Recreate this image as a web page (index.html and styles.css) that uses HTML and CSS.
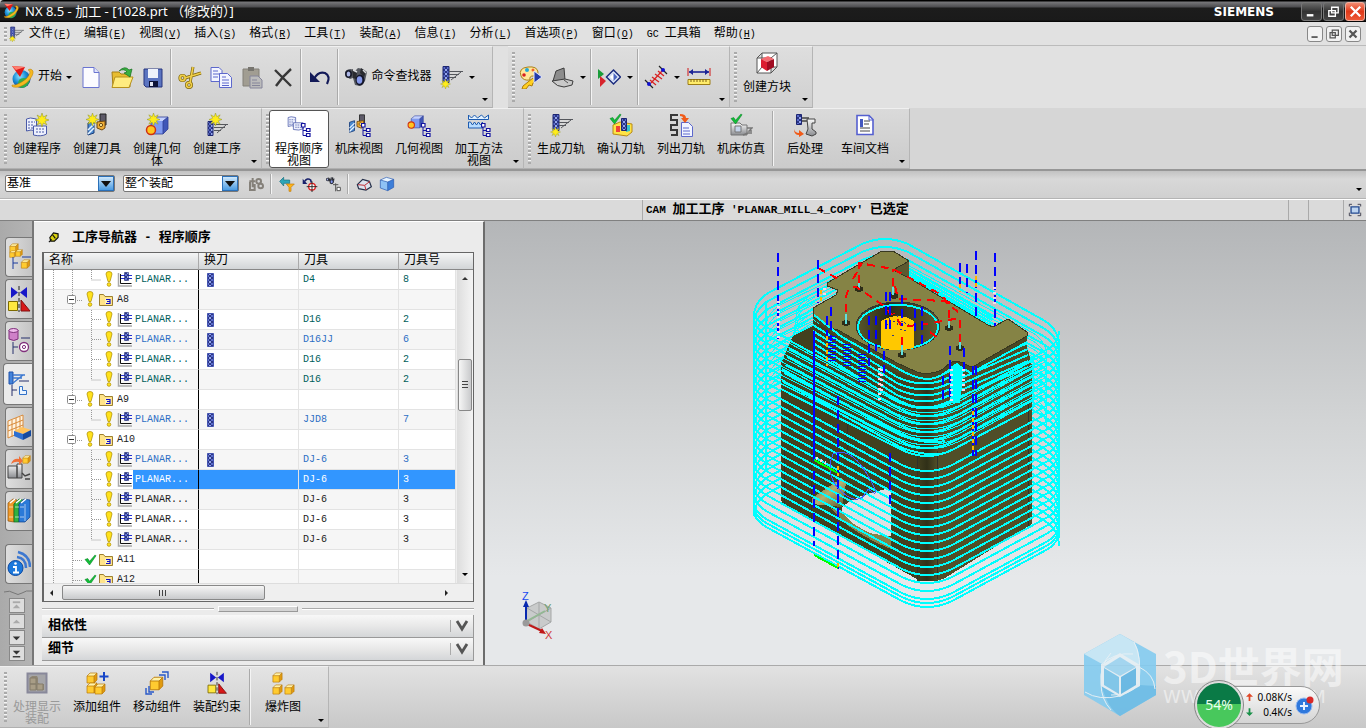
FILE: index.html
```html
<!DOCTYPE html>
<html lang="zh-CN">
<head>
<meta charset="utf-8">
<title>NX 8.5 - 加工</title>
<link rel="stylesheet" href="styles.css">
</head>
<body>
<svg class="defs" aria-hidden="true">
<defs>
<linearGradient id="gBlue" x1="0" x2="1" y1="0" y2="0"><stop offset="0" stop-color="#27338c"/><stop offset=".45" stop-color="#8da0ea"/><stop offset="1" stop-color="#27338c"/></linearGradient>
<radialGradient id="gGlobe" cx=".4" cy=".35" r=".7"><stop offset="0" stop-color="#8fe4ff"/><stop offset=".5" stop-color="#1a8fd8"/><stop offset="1" stop-color="#0a3a90"/></radialGradient>
<linearGradient id="gSteel" x1="0" x2="0" y1="0" y2="1"><stop offset="0" stop-color="#fafafa"/><stop offset="1" stop-color="#8a8c90"/></linearGradient>
<pattern id="knurl" width="4" height="4" patternUnits="userSpaceOnUse"><rect width="4" height="4" fill="#5a6ccc"/><path d="M0 0h2v2h2v2h-2v-2h-2z" fill="#2c3684"/><path d="M2 0h2v2h-2z" fill="#94a6ee"/></pattern>

<symbol id="spark" viewBox="0 0 14 14"><path d="M7 0l1.400 4L12 2l-2 3.600L14 7l-4 1.400 2 3.600-3.600-2L7 14l-1.400-4L2 12l2-3.600L0 7l4-1.400L2 2l3.600 2z" fill="#ffec1a" stroke="#8a9020" stroke-width=".5"/></symbol>
<symbol id="minitree" viewBox="0 0 10 14"><path d="M2 4v8.500h4M2 7.500h4" fill="none" stroke="#1414a0"/><path d="M.5 .5h3.500v3.500h-3.500zM5.500 5.500h3.500v3h-3.500zM5.500 10.500h3.500v3h-3.500z" fill="#fff" stroke="#1414a0" stroke-width="1.200"/></symbol>
<symbol id="gcube" viewBox="0 0 12 12"><path d="M1 4l3-3h7l-3 3z" fill="#fff2a8"/><path d="M1 4h7v7h-7z" fill="#ffcb30"/><path d="M8 4l3-3v7l-3 3z" fill="#e09a10"/><path d="M1 4l3-3h7v7l-3 3h-7zM1 4h7v7M8 4l3-3" fill="none" stroke="#b87808" stroke-width=".7"/></symbol>
<symbol id="check" viewBox="0 0 14 12"><path d="M1 6l3-1 2 3 6-7 1 1-7 10z" fill="#12c03a" stroke="#067a20" stroke-width=".6"/></symbol>

<symbol id="nx" viewBox="0 0 24 24"><circle cx="11.500" cy="14" r="9" fill="url(#gGlobe)"/><path d="M8 19q0-6 6-6 5 0 6 2-2 7-8 8-4-1-4-4" fill="#2fae4c"/><path d="M20 4q5 1 2 7-4 8-13 11-8 1-7-2 2 1 8-2 8-4 10-10 0-3-2-3z" fill="#f6b820" stroke="#b07808" stroke-width=".5"/><path d="M2 1l13 1-5 10z" fill="#e01818"/><path d="M2 1l13 1-9 3z" fill="#ff8070"/></symbol>
<symbol id="new" viewBox="0 0 24 24"><path d="M4 2.500h11l5 5v15h-16z" fill="#fbfbff" stroke="#6a74d0"/><path d="M15 2.500v5h5" fill="#dfe3fb" stroke="#6a74d0"/></symbol>
<symbol id="open" viewBox="0 0 24 24"><path d="M2 7h7l2 2h9v13h-17z" fill="#e8bd30" stroke="#a58018"/><path d="M5 12h18l-4 10.500h-17z" fill="#ffec80" stroke="#b8921c"/><path d="M9 6q6-6 10-1l3-1-2 8-6-4 3-1q-3-4-8-1" fill="#38b040" stroke="#17701f" stroke-width=".7"/></symbol>
<symbol id="save" viewBox="0 0 24 24"><path d="M3 4h18v18h-16l-2-2z" fill="#5b74c0" stroke="#26357e"/><path d="M7 4h10v9h-10z" fill="#eef2fb"/><path d="M8 16h9v6h-9z" fill="#0d1238"/><path d="M9 17h3v4h-3z" fill="#e0e4f2"/></symbol>
<symbol id="cut" viewBox="0 0 24 24"><g fill="none" stroke="#7d6408" stroke-width="3"><circle cx="4.500" cy="13" r="2.600"/><circle cx="11" cy="20" r="2.500"/><path d="M7 13l16-5M12 18l3-16"/></g><g fill="none" stroke="#f0cf4a" stroke-width="1.600"><circle cx="4.500" cy="13" r="2.600"/><circle cx="11" cy="20" r="2.500"/><path d="M7 13l16-5M12 18l3-16"/></g></symbol>
<symbol id="copy" viewBox="0 0 24 24"><g fill="#f3f5ff" stroke="#5d68cc"><path d="M2 2.500h8l3 3v11h-11z"/><path d="M10.500 8.500h8l4 4v10h-12z"/></g><path d="M4 6h5M4 9h7M4 12h5M13 12h4M13 15h7M13 18h7M13 20.500h7" stroke="#5d68cc"/></symbol>
<symbol id="paste" viewBox="0 0 24 24"><path d="M3 4h16v17h-16z" fill="#a19d92" stroke="#838078"/><path d="M8 2h6v4h-6z" fill="#77756f"/><path d="M10 11h8l4 4v8h-12z" fill="#bbb" stroke="#85859a"/><path d="M12 15h5M12 18h8M12 20.500h8" stroke="#85859a"/></symbol>
<symbol id="del" viewBox="0 0 24 24"><path d="M4 5l16 16M20 4q-8 7-15 17" fill="none" stroke="#383838" stroke-width="2.400"/></symbol>
<symbol id="undo" viewBox="0 0 24 24"><path d="M6 14q4-8 11-6 6 3 2 11" fill="none" stroke="#131a58" stroke-width="2.200"/><path d="M2 7v10h10z" fill="#131a58"/></symbol>
<symbol id="bino" viewBox="0 0 24 24"><path d="M1 8q1-4 6-4l4 2 3-3 5 1 4 3-2 9-5 5-5-1-2-7-3 1-3-2z" fill="#55585f"/><path d="M8 4l5 4-1 6-3-1zM17 3l5 4-2 5-4-4z" fill="#2a2b30"/><ellipse cx="4.500" cy="9" rx="3.500" ry="4" fill="#1a1c2c"/><ellipse cx="4.500" cy="9" rx="1.800" ry="2.500" fill="#aeb8e8"/><ellipse cx="16" cy="15" rx="4.500" ry="5.500" fill="#15172a"/><ellipse cx="15.500" cy="15" rx="2.800" ry="3.800" fill="#8699ea"/><path d="M9 5l4 2M19 5l3 3" stroke="#d6d8dc" stroke-width="1.500"/></symbol>
<symbol id="mill" viewBox="0 0 24 24"><path d="M4 1.500h6v16h-6z" fill="url(#knurl)" stroke="#1d2672"/><path d="M10 6.500h14M10 9.500h10M10 12.500h7M22 7l-10 8" stroke="#55575c" fill="none"/><use href="#spark" x="0" y="14" width="13" height="10"/></symbol>
<symbol id="palette" viewBox="0 0 24 24"><path d="M2 11q-3-8 7-9 9-1 10 5 0 4-5 4-4 0-3 4-7 1-9-4" fill="#ffe79a" stroke="#a98018"/><circle cx="8" cy="5" r="2" fill="#22a7d8"/><circle cx="5" cy="10" r="1.800" fill="#d82020"/><circle cx="14" cy="5" r="1.500" fill="#f06030"/><path d="M14 13l-10 8-1 3h4l3-4 3 1 1-3 5-4" fill="#ffcf20" stroke="#ad7d0c"/><path d="M15 6l8 6-8 6z" fill="#253ba8" stroke="#dfe6ff"/></symbol>
<symbol id="shade" viewBox="0 0 24 24"><path d="M3 16l3-10 8-3 1 12z" fill="#8c8c8c" stroke="#3c3c3c"/><path d="M2 16l13-2 8 2-1 4-8 2q-7 0-12-6" fill="#c9c9c9" stroke="#3c3c3c"/><path d="M14 15l4 3" fill="none" stroke="#555"/></symbol>
<symbol id="play" viewBox="0 0 24 24"><path d="M1 4l6 5-6 5z" fill="#1a9c3a"/><path d="M3 11l6 5-6 6z" fill="#d8242c"/><path d="M16.500 5l7 7-7 7-7-7z" fill="#dce6fa" stroke="#1c2c7e" stroke-width="1.500"/><path d="M16.500 8l4 4-4 4-4-4z" fill="#4c67c0"/><path d="M16.500 8v8l-4-4z" fill="#fff"/></symbol>
<symbol id="offset" viewBox="0 0 24 24"><path d="M1 15l8 8M15 1l8 8" stroke="#222" stroke-width="1.200"/><path d="M6 15l6 5M8 12l7 5M11 9l7 5M14 6l6 5M7 18l11-12" stroke="#d82020" stroke-width="1.200"/><circle cx="5" cy="19" r="2" fill="#1111d0"/><circle cx="19" cy="5" r="2" fill="#1111d0"/></symbol>
<symbol id="measure" viewBox="0 0 24 24"><path d="M1 3v8M23 3v8" stroke="#d01818"/><path d="M2 7h20" stroke="#1c2496" stroke-width="1.600"/><path d="M2 7l4-3v6zM22 7l-4-3v6z" fill="#1c2496"/><path d="M1 14.500h22v5h-22z" fill="#ffec6a" stroke="#9c7d15"/><path d="M4 14v3M7 14v3M10 14v3M13 14v3M16 14v3M19 14v3" stroke="#806512"/></symbol>
<symbol id="redcube" viewBox="0 0 24 24"><path d="M2 7h14v15h-14zM7 2h15v14h-15zM2 7l5-5M16 7l6-5M16 22l6-6M2 22l5-6" fill="#fff" stroke="#555"/><path d="M6 8l7-3 6 3-7 3z" fill="#f46a70"/><path d="M6 8l6 3v9l-6-4z" fill="#dc1c30"/><path d="M12 11l7-3v8l-7 4z" fill="#a00c22"/></symbol>
<symbol id="program" viewBox="0 0 24 24"><path d="M1.500 6q3-2 10 0v12q-6-2-10 0z" fill="#eef1fd" stroke="#4a5aa8"/><path d="M8.500 13h13v8q-5 3-13 1z" fill="#eef1fd" stroke="#4a5aa8"/><path d="M3 9h7M3 12h6M3 15h5M11 16h9M11 19h9" stroke="#4a5aa8" stroke-dasharray="2 1"/></symbol>
<symbol id="cprog" viewBox="0 0 24 24"><use href="#program"/><use href="#spark" x="10" y="0" width="14" height="14"/></symbol>
<symbol id="tool" viewBox="0 0 24 24"><path d="M15 1h6v11h-6z" fill="#5d5a68" stroke="#222"/><path d="M12 9l8-1v7l-3 2-5-2z" fill="#f0ae35" stroke="#704810"/><circle cx="16" cy="12" r="1.600" fill="#fff2a0" stroke="#704810"/><path d="M3 10l6-2v12l-6 2z" fill="#4c8ad0" stroke="#173b78"/><path d="M3 17l6-6M3 21l6-6" stroke="#e6f3ff" stroke-width="1.500"/></symbol>
<symbol id="ctool" viewBox="0 0 24 24"><use href="#tool"/><use href="#spark" x="1" y="0" width="13" height="13"/></symbol>
<symbol id="geom" viewBox="0 0 24 24"><path d="M6 8l5-4h12l-5 4z" fill="#c5d2ff"/><path d="M6 8h12v13h-12z" fill="#809af0"/><path d="M18 8l5-4v12l-5 5z" fill="#4057b8"/><path d="M6 8l5-4h12v12l-5 5h-12zM18 8v13M18 8l5-4" fill="none" stroke="#2e3e96" stroke-width=".8"/><circle cx="6" cy="17" r="4.500" fill="#ffc520" stroke="#d03010" stroke-width="1.500"/></symbol>
<symbol id="cgeom" viewBox="0 0 24 24"><use href="#geom"/><use href="#spark" x="2" y="0" width="13" height="13"/></symbol>
<symbol id="cop" viewBox="0 0 24 24"><path d="M3 8.500h5v14h-5z" fill="url(#knurl)" stroke="#1d2672"/><path d="M9 11.500h14M9 14.500h11M9 17.500h7M21 12l-9 8" stroke="#55575c" fill="none"/><use href="#spark" x="4" y="0" width="13" height="13"/></symbol>
<symbol id="vprog" viewBox="0 0 24 24"><use href="#program" x="0" y="-1" width="18" height="20"/><use href="#minitree" x="14" y="10" width="10" height="14"/></symbol>
<symbol id="vtool" viewBox="0 0 24 24"><use href="#tool" x="0" y="0" width="20" height="22"/><use href="#minitree" x="14" y="10" width="10" height="14"/></symbol>
<symbol id="vgeom" viewBox="0 0 24 24"><use href="#geom" x="0" y="0" width="17" height="17"/><use href="#minitree" x="14" y="10" width="10" height="14"/></symbol>
<symbol id="vmethod" viewBox="0 0 24 24"><path d="M1.500 2v4.500h20v-4.500l-4 3-3-3-4 3-3-3-3 3z" fill="#e2f1ff" stroke="#1c5bb0"/><path d="M1.500 9v6h14v-6l-2 3-2-3-2 3-2-3-2 3-2-3z" fill="#b8dcff" stroke="#1c5bb0"/><use href="#minitree" x="14" y="10" width="10" height="14"/></symbol>
<symbol id="verify" viewBox="0 0 24 24"><path d="M4 12l7-3 12 2v8l-5 4-14-2z" fill="#ffe345" stroke="#b78a14"/><path d="M7 13h4v6h-4z" fill="#ef4038"/><path d="M17 12h4v6l-4 1z" fill="#36c5ca"/><path d="M12.500 5.500h5v12h-5z" fill="url(#knurl)" stroke="#1d2672"/><use href="#check" x="0" y="0" width="13" height="11"/></symbol>
<symbol id="list" viewBox="0 0 24 24"><path d="M9 2h-7v5h6v5h-6v5h6v5h-6" fill="none" stroke="#383838" stroke-width="2"/><path d="M12.500 9.500h7l4 4v10h-11z" fill="#f1f4ff" stroke="#5d68cc"/><path d="M14 15h6M14 18h7M14 21h7" stroke="#5d68cc"/><path d="M11 1q6 0 6 4h3l-4 5-4-5h2q0-2-3-2z" fill="#f05a18"/></symbol>
<symbol id="sim" viewBox="0 0 24 24"><path d="M2 10h9l2 2h5v10h-16z" fill="url(#gSteel)" stroke="#777"/><path d="M6 13h6v6h-6z" fill="#c6d4ea" stroke="#777"/><path d="M18 15h5l-3 3h3M14 22l5-2h4" fill="none" stroke="#777" stroke-width="1.400"/><use href="#check" x="1" y="0" width="13" height="11"/></symbol>
<symbol id="post" viewBox="0 0 24 24"><path d="M3.500 1.500h5v10h-5z" fill="url(#knurl)" stroke="#1d2672"/><path d="M9 5h7M9 8h5" stroke="#444" stroke-width="1.500"/><path d="M14 6h8v4h-3v6l4 3v2l-4 2-6-2 2-5z" fill="url(#gSteel)" stroke="#444"/><path d="M1 16q1 4 5 4v-3l5 4-5 3v-2q-5 0-5-6" fill="#f05a18"/></symbol>
<symbol id="doc" viewBox="0 0 24 24"><path d="M4 2.500h12l4 4v15h-16z" fill="#fff" stroke="#5560d0" stroke-width="1.600"/><path d="M7 6h3v8h-3z" fill="#4458c0"/><path d="M11 8h6M11 11h5M7 15h10M7 18h10" stroke="#444"/><path d="M16 2v5h4" fill="none" stroke="#5560d0"/></symbol>
<symbol id="links" viewBox="0 0 24 24"><g fill="none" stroke="#85817a" stroke-width="3"><path d="M3 9v12h7v-9M7 3v14M2 8h9"/><circle cx="16" cy="8" r="3.500"/><circle cx="19" cy="15" r="3.500"/></g></symbol>
<symbol id="filter" viewBox="0 0 24 24"><path d="M1 8l6-6v4h9v5h-9v4z" fill="#2da6b8" stroke="#126c7c"/><path d="M11 12h12l-5 5v6h-3v-6z" fill="#ffb418" stroke="#c07808"/></symbol>
<symbol id="target" viewBox="0 0 24 24"><path d="M4 8q4-6 9-2l1 4" fill="none" stroke="#18206a" stroke-width="2.400"/><path d="M1 4v8h7z" fill="#18206a"/><circle cx="15" cy="16" r="5" fill="#fff" stroke="#e02020" stroke-width="2"/><path d="M15 8v16M7 16h16" stroke="#222" stroke-width="1.400"/></symbol>
<symbol id="finder" viewBox="0 0 24 24"><use href="#bino" x="0" y="0" width="16" height="14"/><path d="M16 11v12M12 13h8M18 17h5v5h-5z" fill="#fff" stroke="#555" stroke-width="1.500"/></symbol>
<symbol id="wire" viewBox="0 0 24 24"><path d="M2 13l8-8 10 3 3 8-8 5-11-2z" fill="#dbe2ef" stroke="#26304a" stroke-width="1.800"/><path d="M3 13l10 1 8-6M13 14l2 7" fill="none" stroke="#c22f38" stroke-width="1.500"/></symbol>
<symbol id="bluecube" viewBox="0 0 24 24"><path d="M2 6l9-4 11 3-9 4z" fill="#e9f5ff"/><path d="M2 6l11 3v13l-11-4z" fill="#8fc2f5"/><path d="M13 9l9-4v12l-9 5z" fill="#3d7ed8"/><path d="M2 6l9-4 11 3v12l-9 5-11-4zM2 6l11 3v13M13 9l9-4" fill="none" stroke="#2558b0"/></symbol>

<symbol id="tAsm" viewBox="0 0 24 28"><use href="#gcube" x="2" y="0" width="10" height="10"/><use href="#gcube" x="2" y="7" width="8" height="8"/><use href="#gcube" x="8" y="6" width="8" height="8"/><path d="M6 14v12M6 20h5M15 14h9" stroke="#1a3a9c"/><use href="#gcube" x="13" y="16" width="11" height="10"/></symbol>
<symbol id="constraint" viewBox="0 0 24 28"><path d="M4 2v11l7-5.500zM20 2v11l-7-5.500z" fill="#1818c8"/><path d="M12 1v26" stroke="#222" stroke-dasharray="4 2"/><path d="M1.500 16.500h9v9h-9z" fill="#ffe840" stroke="#7d6a00"/><path d="M14 15l9 11h-9z" fill="#d81818" stroke="#801010"/></symbol>
<symbol id="tPart" viewBox="0 0 24 28"><path d="M2 3v9q5 3 9 0v-9z" fill="#cf80c8" stroke="#80307c"/><ellipse cx="6.500" cy="3.500" rx="4.500" ry="2" fill="#f0bcec" stroke="#80307c"/><path d="M14 11h9M6 15v12M6 20h5" stroke="#26306c"/><circle cx="17" cy="20" r="4.500" fill="#fff" stroke="#80307c" stroke-width="1.300"/><circle cx="17" cy="20" r="1.600" fill="none" stroke="#80307c"/></symbol>
<symbol id="tOp" viewBox="0 0 24 28"><path d="M3 2h4v12h-4z" fill="#4384dc" stroke="#2050a8"/><path d="M7 5h12M7 8h9M17 5l-10 8" stroke="#3c78d0" stroke-width="1.400"/><path d="M13 11h10M6 15v11M6 20h5" stroke="#26306c"/><path d="M13.500 16.500h3v4h4v4h-7z" fill="#eaf4ff" stroke="#3070c8"/></symbol>
<symbol id="tFeat" viewBox="0 0 24 28"><path d="M1 8l15-6v16l-15 7z" fill="#fff3df" stroke="#d88a3a"/><path d="M1 13l15-6M1 18l15-6M5 7v17M9 5v18M13 4v17" stroke="#d88a3a"/><path d="M7 18l8-4 9 3-8 4z" fill="#ffc25c"/><path d="M7 18l9 3v6l-9-4z" fill="#2d6fd0"/><path d="M16 21l8-4v6l-8 4z" fill="#164a9e"/></symbol>
<symbol id="tMach" viewBox="0 0 24 28"><path d="M1 11h9v12h-9zM10 9h5v14h-5z" fill="url(#gSteel)" stroke="#444"/><path d="M15 18l3 3 5-2M18 24h5" fill="none" stroke="#444" stroke-width="1.400"/><path d="M4 9q2-6 8-5v-3l4 5-4 4v-3q-4-1-8 2" fill="#f07038"/><use href="#gcube" x="15" y="0" width="9" height="9"/></symbol>
<symbol id="tBooks" viewBox="0 0 24 28"><g stroke-width=".7"><path d="M1 6l5-4 4 1-3 4v18l-6-1z" fill="#f09a28" stroke="#8c4e08"/><path d="M7 7l5-5 4 1-4 4v18h-5z" fill="#30b040" stroke="#0f6a1c"/><path d="M12 7l5-5 6 1v17l-5 5h-6z" fill="#2a7ad8" stroke="#0e3f88"/></g><path d="M3 6l5-4M9 6l5-4M14 6l5-4" stroke="#fff" stroke-width="1.500"/><path d="M18 7v17M2 10h4M2 20h4M8 10h4M8 20h4M13 10h4M13 20h4" stroke="#fff" stroke-opacity=".6"/></symbol>
<symbol id="tInfo" viewBox="0 0 24 28"><path d="M10 7q9 1 9 11M11 2q12 3 12 15" fill="none" stroke="#3d78d0" stroke-width="2.500"/><circle cx="8.500" cy="18" r="7.500" fill="#1b78dc" stroke="#0c48a0"/><path d="M6 17h3v5M6 22.500h6" fill="none" stroke="#fff" stroke-width="1.800"/><circle cx="8.500" cy="13.500" r="1.300" fill="#fff"/></symbol>

<symbol id="asmOff" viewBox="0 0 24 24"><path d="M2.500 2.500h19v19h-19z" fill="#a5a5a8" stroke="#88889a" stroke-width="2"/><path d="M5 7l2-2h5l1 2v5l2 1h4v6h-14z" fill="#8f8674"/><path d="M5 7h6v6h-6zM5 13h6v6h-6zM12 13h6v6h-6z" fill="#a89d86" stroke="#857c6a"/></symbol>
<symbol id="asmAdd" viewBox="0 0 24 24"><use href="#gcube" x="1" y="1" width="12" height="12"/><use href="#gcube" x="1" y="11" width="12" height="12"/><use href="#gcube" x="9" y="12" width="12" height="12"/><path d="M19 1v9M14.500 5.500h9" stroke="#1746c8" stroke-width="2"/></symbol>
<symbol id="asmMove" viewBox="0 0 24 24"><use href="#gcube" x="4" y="5" width="15" height="15"/><path d="M17 1h6v6M14 4h6v5M1 17v6h6M4 15v6h5" fill="none" stroke="#2858c8" stroke-width="1.400"/></symbol>
<symbol id="explode" viewBox="0 0 24 24"><use href="#gcube" x="1" y="1" width="11" height="11"/><use href="#gcube" x="1" y="13" width="11" height="11"/><use href="#gcube" x="13" y="13" width="11" height="11"/></symbol>

<symbol id="bang" viewBox="0 0 8 16"><path d="M1 3q0-2.500 3-2.500t3 2.500l-2 7.500h-2z" fill="#ffe21c" stroke="#b59508" stroke-width=".8"/><circle cx="4" cy="13.500" r="1.800" fill="#ffe21c" stroke="#b59508" stroke-width=".8"/></symbol>
<symbol id="folder" viewBox="0 0 14 13"><path d="M.5 1.500h4l1.500 2h7.500v9h-13z" fill="#ffe48a" stroke="#9c8030"/><path d="M6 5.500h6v6h-6z" fill="#fff2b8"/><path d="M7 6.500h4v4h-4M8 8.500h3" stroke="#1212c8" stroke-width="1.200" fill="none"/></symbol>
<symbol id="opicon" viewBox="0 0 16 15"><path d="M1.500 1v13h13.500" fill="none" stroke="#aaa" stroke-width="1.500"/><path d="M3.500 2v9.500h11" fill="none" stroke="#111"/><path d="M4 3.500h11M4 6.500h11" stroke="#2430d0"/><path d="M7.500 .5h4v8h-4z" fill="url(#knurl)" stroke="#1d2672" stroke-width=".6"/></symbol>
<symbol id="gLeaf" viewBox="0 0 89 20"><path d="M9.500 0v20M28.500 0v20M47.500 0v20M48 9.500h9" fill="none" stroke="#999" stroke-dasharray="1 1"/><use href="#bang" x="61" y="1" width="8" height="16"/><use href="#opicon" x="73" y="2" width="16" height="15"/></symbol>
<symbol id="gLast" viewBox="0 0 89 20"><path d="M9.500 0v20M28.500 0v20M47.500 0v10h9" fill="none" stroke="#999" stroke-dasharray="1 1"/><use href="#bang" x="61" y="1" width="8" height="16"/><use href="#opicon" x="73" y="2" width="16" height="15"/></symbol>
<symbol id="gGroup" viewBox="0 0 71 20"><path d="M9.500 0v20M28.500 0v20M33 10.500h5" fill="none" stroke="#999" stroke-dasharray="1 1"/><rect x="23.500" y="5.500" width="8" height="8" rx="1" fill="#fff" stroke="#8a8a8a"/><path d="M25 9.500h5" stroke="#333"/><use href="#bang" x="42" y="1" width="8" height="16"/><use href="#folder" x="55" y="3" width="14" height="13"/></symbol>
<symbol id="gDone" viewBox="0 0 71 20"><path d="M9.500 0v20M28.500 0v20M29 10.500h10" fill="none" stroke="#999" stroke-dasharray="1 1"/><use href="#check" x="40" y="4" width="13" height="11"/><use href="#folder" x="55" y="3" width="14" height="13"/></symbol>
<symbol id="chg" viewBox="0 0 8 14"><path d="M.5 .5h6v13h-6z" fill="url(#knurl)" stroke="#4454b0"/></symbol>
</defs>
</svg>

<div class="app">
<header class="titlebar">
  <svg class="i16"><use href="#nx"/></svg>
  <h1>NX 8.5 - 加工 - [1028.prt （修改的）]</h1>
  <span class="brand">SIEMENS</span>
  <button class="wb" aria-label="最小化"><svg viewBox="0 0 20 18"><path d="M5 13h7" stroke="#fff" stroke-width="2.500"/></svg></button>
  <button class="wb" aria-label="还原"><svg viewBox="0 0 20 18"><path d="M8 4.500h7v6h-7zM5 8h7v6h-7z" fill="#444" stroke="#fff" stroke-width="1.400"/></svg></button>
  <button class="wb close" aria-label="关闭"><svg viewBox="0 0 20 18"><path d="M5 4l10 10M15 4l-10 10" stroke="#fff" stroke-width="2.400"/></svg></button>
</header>

<nav class="menubar">
  <span class="grip short"></span>
  <svg class="i16"><use href="#mill"/></svg>
  <button>文件<span>(<u>F</u>)</span></button><button>编辑<span>(<u>E</u>)</span></button><button>视图<span>(<u>V</u>)</span></button><button>插入<span>(<u>S</u>)</span></button><button>格式<span>(<u>R</u>)</span></button><button>工具<span>(<u>T</u>)</span></button><button>装配<span>(<u>A</u>)</span></button><button>信息<span>(<u>I</u>)</span></button><button>分析<span>(<u>L</u>)</span></button><button>首选项<span>(<u>P</u>)</span></button><button>窗口<span>(<u>O</u>)</span></button><button><span>GC </span>工具箱</button><button>帮助<span>(<u>H</u>)</span></button>
  <div class="mdi">
    <button aria-label="最小化窗口"><svg viewBox="0 0 16 16"><path d="M4 11.500h7" stroke="#555" stroke-width="2"/></svg></button>
    <button aria-label="还原窗口"><svg viewBox="0 0 16 16"><path d="M6 3.500h7v6h-7zM3.500 6.500h6v6h-6z" fill="#eee" stroke="#555" stroke-width="1.400"/></svg></button>
    <button aria-label="关闭窗口"><svg viewBox="0 0 16 16"><path d="M4 4l8 8M12 4l-8 8" stroke="#555" stroke-width="2.600"/></svg></button>
  </div>
</nav>

<div class="toolrow">
  <div class="group first">
    <span class="grip"></span>
    <button class="tb start"><svg class="ic"><use href="#nx"/></svg>开始<i class="dn"></i></button>
    <button class="tb" aria-label="新建"><svg class="ic"><use href="#new"/></svg></button>
    <button class="tb" aria-label="打开"><svg class="ic"><use href="#open"/></svg></button>
    <button class="tb" aria-label="保存"><svg class="ic"><use href="#save"/></svg></button>
    <span class="sep"></span>
    <button class="tb" aria-label="剪切"><svg class="ic"><use href="#cut"/></svg></button>
    <button class="tb" aria-label="复制"><svg class="ic"><use href="#copy"/></svg></button>
    <button class="tb" aria-label="粘贴" disabled><svg class="ic"><use href="#paste"/></svg></button>
    <button class="tb" aria-label="删除"><svg class="ic"><use href="#del"/></svg></button>
    <span class="sep"></span>
    <button class="tb" aria-label="撤消"><svg class="ic"><use href="#undo"/></svg></button>
    <span class="sep"></span>
    <button class="tb finder"><svg class="ic"><use href="#bino"/></svg>命令查找器</button>
    <button class="tb" aria-label="刀轨"><svg class="ic"><use href="#mill"/></svg></button>
    <button class="drop" aria-label="更多"><i class="dn"></i></button>
    <button class="over" aria-label="工具条选项"><i class="dn"></i></button>
  </div>
  <div class="group tight view">
    <span class="grip"></span>
    <button class="tb" aria-label="编辑对象显示"><svg class="ic"><use href="#palette"/></svg></button>
    <button class="tb" aria-label="着色"><svg class="ic"><use href="#shade"/></svg></button>
    <button class="drop" aria-label="着色选项"><i class="dn"></i></button>
    <span class="sep"></span>
    <button class="tb" aria-label="显示"><svg class="ic"><use href="#play"/></svg></button>
    <button class="drop" aria-label="显示选项"><i class="dn"></i></button>
    <span class="sep"></span>
    <button class="tb" aria-label="偏置"><svg class="ic"><use href="#offset"/></svg></button>
    <button class="drop" aria-label="偏置选项"><i class="dn"></i></button>
    <button class="tb" aria-label="测量距离"><svg class="ic"><use href="#measure"/></svg></button>
    <button class="over" aria-label="工具条选项"><i class="dn"></i></button>
  </div>
  <div class="group">
    <span class="grip"></span>
    <button class="big"><svg class="ic"><use href="#redcube"/></svg><span>创建方块</span></button>
    <button class="over" aria-label="工具条选项"><i class="dn"></i></button>
  </div>
</div>

<div class="toolrow lower">
  <div class="group">
    <span class="grip"></span>
    <button class="big"><svg class="ic"><use href="#cprog"/></svg><span>创建程序</span></button>
    <button class="big"><svg class="ic"><use href="#ctool"/></svg><span>创建刀具</span></button>
    <button class="big"><svg class="ic"><use href="#cgeom"/></svg><span>创建几何体</span></button>
    <button class="big"><svg class="ic"><use href="#cop"/></svg><span>创建工序</span></button>
    <button class="over" aria-label="工具条选项"><i class="dn"></i></button>
  </div>
  <div class="group">
    <span class="grip"></span>
    <button class="big on" aria-pressed="true"><svg class="ic"><use href="#vprog"/></svg><span>程序顺序视图</span></button>
    <button class="big"><svg class="ic"><use href="#vtool"/></svg><span>机床视图</span></button>
    <button class="big"><svg class="ic"><use href="#vgeom"/></svg><span>几何视图</span></button>
    <button class="big"><svg class="ic"><use href="#vmethod"/></svg><span>加工方法视图</span></button>
    <button class="over" aria-label="工具条选项"><i class="dn"></i></button>
  </div>
  <div class="group tight">
    <span class="grip"></span>
    <button class="big"><svg class="ic"><use href="#mill"/></svg><span>生成刀轨</span></button>
    <button class="big"><svg class="ic"><use href="#verify"/></svg><span>确认刀轨</span></button>
    <button class="big"><svg class="ic"><use href="#list"/></svg><span>列出刀轨</span></button>
    <button class="big"><svg class="ic"><use href="#sim"/></svg><span>机床仿真</span></button>
    <span class="sep"></span>
    <button class="big"><svg class="ic"><use href="#post"/></svg><span>后处理</span></button>
    <button class="big"><svg class="ic"><use href="#doc"/></svg><span>车间文档</span></button>
    <button class="over" aria-label="工具条选项"><i class="dn"></i></button>
  </div>
</div>

<div class="selbar">
  <span class="combo"><select aria-label="类型过滤器"><option>基准</option></select><i class="dn"></i></span>
  <span class="combo wide"><select aria-label="选择范围"><option>整个装配</option></select><i class="dn"></i></span>
  <button aria-label="关联" disabled><svg class="i16"><use href="#links"/></svg></button>
  <span class="sep"></span>
  <button aria-label="重置过滤器"><svg class="i16"><use href="#filter"/></svg></button>
  <button aria-label="取消选择"><svg class="i16"><use href="#target"/></svg></button>
  <button aria-label="在导航器中查找"><svg class="i16"><use href="#finder"/></svg></button>
  <span class="sep"></span>
  <button aria-label="线框"><svg class="i16"><use href="#wire"/></svg></button>
  <button aria-label="实体"><svg class="i16"><use href="#bluecube"/></svg></button>
  <button class="over" aria-label="工具条选项"><i class="dn"></i></button>
</div>

<div class="status">
  <span class="cue"></span>
  <output><span>CAM </span>加工工序<span> 'PLANAR_MILL_4_COPY' </span>已选定</output>
  <span class="cell"></span><span class="cell last"></span>
  <button aria-label="全屏"><svg viewBox="0 0 16 16"><path d="M1.500 4v-2.500h3M11 1.500h3.500v2.500M14.500 11v3.500h-3.500M4 14.500h-2.500v-3.500" fill="none" stroke="#334"/><path d="M3.500 4.500h9v7h-9z" fill="#bcd4f0" stroke="#234a90" stroke-width="1.500"/></svg></button>
</div>

<main>
  <aside class="rail">
    <button aria-label="装配导航器"><svg><use href="#tAsm"/></svg></button>
    <button aria-label="约束导航器"><svg><use href="#constraint"/></svg></button>
    <button aria-label="部件导航器"><svg><use href="#tPart"/></svg></button>
    <button class="on" aria-label="工序导航器"><svg><use href="#tOp"/></svg></button>
    <button aria-label="加工特征导航器"><svg><use href="#tFeat"/></svg></button>
    <button aria-label="机床导航器"><svg><use href="#tMach"/></svg></button>
    <button aria-label="重用库"><svg><use href="#tBooks"/></svg></button>
    <button class="info" aria-label="帮助信息"><svg><use href="#tInfo"/></svg></button>
    <svg class="wave" viewBox="0 0 28 6"><path d="M0 2q6-2 10 1t8 0 10-2" fill="none" stroke="#777"/></svg>
    <div class="pager">
      <button aria-label="最前" disabled><svg viewBox="0 0 14 14"><path d="M3 3.500h8" stroke="#aaa" stroke-width="2"/><path d="M3 10l4-4 4 4z" fill="#aaa"/></svg></button>
      <button aria-label="上移" disabled><svg viewBox="0 0 14 14"><path d="M3 9l4-4 4 4z" fill="#aaa"/></svg></button>
      <button aria-label="下移"><svg viewBox="0 0 14 14"><path d="M3 6l4 4 4-4z" fill="#333"/></svg></button>
      <button aria-label="最后"><svg viewBox="0 0 14 14"><path d="M3 4l4 4 4-4z" fill="#333"/><path d="M3 10.500h8" stroke="#333" stroke-width="1.500"/></svg></button>
    </div>
  </aside>

  <section class="nav">
    <h2><svg viewBox="0 0 12 12"><path d="M2 6l4-5 5 1v4l-4 4-4 0z" fill="#d8d010" stroke="#111" stroke-width="1.300"/><path d="M1 11l3-3M5 3l3 4" stroke="#111" stroke-width="1.300"/></svg>工序导航器<span> - </span>程序顺序</h2>
    <div class="frame">
      <div class="clip">
      <table>
        <colgroup><col class="c1"><col class="c2"><col class="c3"><col class="c4"><col class="c5"></colgroup>
        <thead><tr><th>名称</th><th>换刀</th><th>刀具</th><th>刀具号</th><th></th></tr></thead>
        <tbody>
        <tr class="g"><td><div><svg class="leaf"><use href="#gLast"/></svg><b>PLANAR...</b></div></td><td><svg class="chg"><use href="#chg"/></svg></td><td>D4</td><td>8</td></tr>
        <tr><td><div><svg class="grp"><use href="#gGroup"/></svg><b>A8</b></div></td><td></td><td></td><td></td></tr>
        <tr class="g"><td><div><svg class="leaf"><use href="#gLeaf"/></svg><b>PLANAR...</b></div></td><td><svg class="chg"><use href="#chg"/></svg></td><td>D16</td><td>2</td></tr>
        <tr class="b"><td><div><svg class="leaf"><use href="#gLeaf"/></svg><b>PLANAR...</b></div></td><td><svg class="chg"><use href="#chg"/></svg></td><td>D16JJ</td><td>6</td></tr>
        <tr class="g"><td><div><svg class="leaf"><use href="#gLeaf"/></svg><b>PLANAR...</b></div></td><td><svg class="chg"><use href="#chg"/></svg></td><td>D16</td><td>2</td></tr>
        <tr class="g"><td><div><svg class="leaf"><use href="#gLast"/></svg><b>PLANAR...</b></div></td><td></td><td>D16</td><td>2</td></tr>
        <tr><td><div><svg class="grp"><use href="#gGroup"/></svg><b>A9</b></div></td><td></td><td></td><td></td></tr>
        <tr class="b"><td><div><svg class="leaf"><use href="#gLast"/></svg><b>PLANAR...</b></div></td><td><svg class="chg"><use href="#chg"/></svg></td><td>JJD8</td><td>7</td></tr>
        <tr><td><div><svg class="grp"><use href="#gGroup"/></svg><b>A10</b></div></td><td></td><td></td><td></td></tr>
        <tr class="b"><td><div><svg class="leaf"><use href="#gLeaf"/></svg><b>PLANAR...</b></div></td><td><svg class="chg"><use href="#chg"/></svg></td><td>DJ-6</td><td>3</td></tr>
        <tr class="sel"><td><div><svg class="leaf"><use href="#gLeaf"/></svg><b>PLANAR...</b></div></td><td></td><td>DJ-6</td><td>3</td></tr>
        <tr><td><div><svg class="leaf"><use href="#gLeaf"/></svg><b>PLANAR...</b></div></td><td></td><td>DJ-6</td><td>3</td></tr>
        <tr><td><div><svg class="leaf"><use href="#gLeaf"/></svg><b>PLANAR...</b></div></td><td></td><td>DJ-6</td><td>3</td></tr>
        <tr><td><div><svg class="leaf"><use href="#gLast"/></svg><b>PLANAR...</b></div></td><td></td><td>DJ-6</td><td>3</td></tr>
        <tr><td><div><svg class="grp"><use href="#gDone"/></svg><b>A11</b></div></td><td></td><td></td><td></td></tr>
        <tr><td><div><svg class="grp"><use href="#gDone"/></svg><b>A12</b></div></td><td></td><td></td><td></td></tr>
        </tbody>
      </table>
      <div class="vscroll"><i class="up"></i><span class="thumb"></span><i class="dn"></i></div>
      </div>
      <div class="hscroll"><i class="lf"></i><span class="thumb"></span><i class="rt"></i></div>
    </div>
    <div class="splitter"><span></span></div>
    <button class="fold"><span>相依性</span><svg viewBox="0 0 14 12"><path d="M2 1l5 8 5-8" fill="none" stroke="#555" stroke-width="2.800"/></svg></button>
    <button class="fold"><span>细节</span><svg viewBox="0 0 14 12"><path d="M2 1l5 8 5-8" fill="none" stroke="#555" stroke-width="2.800"/></svg></button>
  </section>

  <section class="viewport" aria-label="图形窗口">
    <svg id="scene" viewBox="485 220 881 445" preserveAspectRatio="xMinYMin meet">
      <defs>
        <linearGradient id="corner" x1="0" x2="1"><stop offset="0" stop-color="#42401f"/><stop offset=".5" stop-color="#303018"/><stop offset="1" stop-color="#504e28"/></linearGradient>
        <linearGradient id="bore" x1="0" x2="1"><stop offset="0" stop-color="#5a582c"/><stop offset=".4" stop-color="#2c2b16"/><stop offset="1" stop-color="#625f30"/></linearGradient>
        <linearGradient id="pocket" x1="0" x2="1" y1="0" y2="1"><stop offset="0" stop-color="#55532a"/><stop offset=".5" stop-color="#b4b070"/><stop offset="1" stop-color="#55532a"/></linearGradient>
      </defs>
      <g id="back" class="path"></g>
      <path d="M781 362L793 335L813 325V318L917 372H937L1027 338V345L1032 365V523L945 577Q930 584 915 577L787 505Q781 502 781 497Z" fill="#42401f"/>
      <path d="M937 370L1027 336V345L1032 365V523L945 577L937 580Z" fill="#504e28"/>
      <path d="M917 368H937V580H917Z" fill="url(#corner)"/>
      <path d="M784 450V503M811 440V520M847 415V455M917 450V578M937 450V578M1028 400V525" stroke="#30302a" fill="none"/>
      <path d="M812 497L842 477L846 482L842 506L812 503Z" fill="url(#pocket)"/>
      <path d="M830 507L842 510L858 526L891 536V548Q870 540 850 526Z" fill="#85834a"/>
      <path d="M842 506Q852 498 864 494T891 487V535L873 533Q850 524 842 510Z" fill="#dfe1e3"/>
      <g id="front" class="path"></g>
      <path d="M813 307V318L843 340L897 371Q917 382 935 379Q944 377 950 368L957 366L973 371L1027 341V331L973 365L957 360L950 362L943 368L930 373Z" fill="#4a4824"/>
      <path d="M909 260V277L893 269Z" fill="#5c5a30"/>
      <path d="M882 250H893L909 260L893 269L909 277L988 324L993 326L1008 318L1027 331V335L976 364Q971 367 967 364Q957 358 950 362L943 368Q930 375 917 371L897 362L843 332Q840 329 834 328L815 317Q813 315 813 307L836 294L838 289L827 285V282Z" fill="#858345" stroke="#383820"/>
      <path d="M814 314L842 336L897 367Q917 379 930 378Q942 376 950 368L957 364L971 372L1027 341" class="path"/>
      <path d="M950 366L957 362L964 367L960 402H950Z" fill="#0ff"/>
      <ellipse cx="898" cy="325" rx="42" ry="24" fill="url(#bore)" stroke="#333"/>
      <ellipse cx="898" cy="326" rx="40" ry="22" class="path"/>
      <path d="M881 320Q898 310 914 320V347Q898 351 881 347Z" fill="#ffc800"/>
      <path d="M886 325q10-10 24 0M889 317v12M897 314v10M900 328l6 2M892 334l4 2" fill="none" stroke="#333a80" stroke-dasharray="2 2"/>
      <g fill="#2e2d18"><ellipse cx="859" cy="288" rx="4" ry="3"/><ellipse cx="846" cy="322" rx="4" ry="3"/><ellipse cx="894" cy="295" rx="4" ry="3"/><ellipse cx="949" cy="327" rx="4" ry="3"/><ellipse cx="960" cy="347" rx="4" ry="3"/><ellipse cx="902" cy="354" rx="4" ry="3"/></g>
      <path d="M859 281v8M846 313v10M893 286v8M949 318v9M960 340v8M902 344v10" stroke="#5fe0e0" stroke-width="2"/>
      <g class="red"><path d="M818 267L842 280M859 282V262L893 268L940 293L952 306M853 278L862 262M846 311V296Q849 282 858 287L884 305L892 314M893 285V268M895 285L898 298L945 300L958 311M949 317V300M960 341V317L932 322L902 326L894 312M902 344V330M930 331L938 337"/></g>
      <g class="blue"><path d="M778 252V338M818 259V302M827 315V345M831 306V340M838 395V568M869 315V365M876 315V350M884 350V372M886 291V330M890 291V330M902 294V325M915 308V330M922 306V345M960 262V285M967 263V292M976 250V315M995 252V325M973 365V455M976 365V455M943 375V400M950 345V400M964 347V370M890 452V508M814 470V545"/></g>
      <path d="M814 330V460" class="solid"/>
      <path d="M833 453Q850 445 867 473T868 488Q860 507 842 491T833 453" fill="none" stroke="#405cff"/>
      <path d="M814 459L838 472M814 554L838 567" stroke="#0f0" stroke-width="2"/>
      <path d="M838 465v10M838 562v7M821 289v14M960 283v8M976 275v12M973 410v42M827 335v30" stroke="#ffb400" stroke-width="2" stroke-dasharray="4 3"/>
      <path d="M778 300v40M824 287v10M879 367v35M881 368v25M994 286v18M951 368v32M963 368v24M816 457l10 5" stroke="#f8d8e8" stroke-width="3" stroke-dasharray="2 3"/>
      <g class="blue fine"><path d="M832 335V360M847 343V367M862 353V383" stroke-width="8"/></g>
      <g id="triad">
        <path d="M525 622L527 607L539 601L551 607V621L539 628L527 621Z" fill="#c9cbcb" stroke="#a5a7a7"/>
        <path d="M539 601V628M527 607L551 621M551 607L527 621" stroke="#a5a7a7" fill="none"/>
        <path d="M527 620L545 610" stroke="#93b893" stroke-width="2"/>
        <path d="M526 621V604" stroke="#0828b0" stroke-width="2"/><path d="M526 599l3 7h-6z" fill="#0828b0"/>
        <path d="M527 623L542 630" stroke="#c01818" stroke-width="2"/><path d="M546 633l-7-1 3-5z" fill="#c01818"/>
        <circle cx="526" cy="622" r="3.500" fill="#9a9a9a"/>
        <text x="522" y="599" fill="#1848f0">Z</text><text x="545" y="638" fill="#d03838">X</text><text x="544" y="611" fill="#70a070">Y</text>
      </g>
    </svg>
  </section>
</main>

<footer class="toolrow bottom">
  <div class="group">
    <span class="grip"></span>
    <button class="big" disabled><svg class="ic"><use href="#asmOff"/></svg><span>处理显示装配</span></button>
    <button class="big"><svg class="ic"><use href="#asmAdd"/></svg><span>添加组件</span></button>
    <button class="big"><svg class="ic"><use href="#asmMove"/></svg><span>移动组件</span></button>
    <button class="big"><svg class="ic"><use href="#constraint"/></svg><span>装配约束</span></button>
    <span class="sep"></span>
    <button class="big"><svg class="ic"><use href="#explode"/></svg><span>爆炸图</span></button>
    <button class="over" aria-label="工具条选项"><i class="dn"></i></button>
  </div>
</footer>

<div class="mark">
  <svg viewBox="0 0 72 82"><path d="M36 0L72 20V61L36 82L0 61V20Z" fill="#84ccf0"/><path d="M36 0L50 8Q56 16 56 33L36 20L18 30L0 20Z" fill="#c4e6f6"/><path d="M72 52V61L36 82Q24 75 17 50L36 62L55 51Z" fill="#68bce8"/><g fill="none" stroke="#e6f2f8"><path d="M50 8Q58 22 55 50M55 33Q70 40 71 55M55 50Q45 62 27 61M36 62Q15 67 1 58M17 50Q15 32 27 19M17 31Q30 18 49 20M17 50Q17 65 27 76"/></g><path d="M36 19L56 31V52L36 63L17 52V31Z" fill="#e4eff5"/><path d="M36 23L52 33L36 42L20 33Z" fill="#9cd4f0"/><path d="M20 34L35 43V60L20 51Z" fill="#78c4ea"/><path d="M52 34L37 43V60L52 51Z" fill="#60b6e4"/></svg>
  <div><strong>3D世界网</strong><span>WWW.3DSJW.COM</span></div>
</div>
<div class="meter">
  <span class="ball">54%</span>
  <dl><dt class="upl" title="上传"><svg viewBox="0 0 8 10"><path d="M4 0l4 4h-3v5h-2v-5h-3z" fill="#e04828"/></svg></dt><dd>0.08K/s</dd><dt title="下载"><svg viewBox="0 0 8 10"><path d="M4 9l4-4h-3v-5h-2v5h-3z" fill="#189048"/></svg></dt><dd>0.4K/s</dd></dl>
  <button aria-label="加速"><svg viewBox="0 0 20 20"><circle cx="9" cy="11" r="8" fill="#2f78dc" stroke="#9abcf0"/><path d="M9 7v8M5 11h8" stroke="#e8f1ff" stroke-width="2"/><circle cx="15" cy="5" r="3.500" fill="#d82828"/></svg></button>
</div>
</div>
<script src="scene.js"></script>
</body>
</html>
```

FILE: styles.css
```css
* { box-sizing: border-box; }
body { margin: 0; font: 12px/16px "Liberation Mono", "Noto Sans CJK SC", monospace; color: #000; background: #d6d6d6; }
button { font: inherit; color: inherit; border: 0; padding: 0; background: none; }
h1, h2, dl, dd { margin: 0; }
.defs { position: absolute; width: 0; height: 0; }
.app { position: relative; display: flex; flex-direction: column; height: 100vh; min-height: 600px; overflow: hidden; }
.i16 { width: 16px; height: 16px; flex: none; }
.ic { width: 24px; height: 24px; flex: none; }

.dn, .up, .lf, .rt { display: block; width: 0; height: 0; border: 3px solid transparent; }
.dn { border-top-color: #000; border-bottom: 0; }
.up { border-bottom-color: #333; border-top: 0; }
.lf { border-right-color: #222; border-left: 0; }
.rt { border-left-color: #222; border-right: 0; }

.titlebar { flex: none; height: 22px; display: flex; align-items: center; padding: 0 1px 0 3px; background: linear-gradient(#000 0 1px, #77777a 2px, #4c4c4f 7px, #1c1c1c 8px, #1a1a1a 20px, #000); border-radius: 4px 0 0 0; }
.titlebar h1 { margin-left: 6px; font: 13px/20px "Noto Sans", "Noto Sans CJK SC", sans-serif; color: #fff; }
.brand { margin: 1px 26px 0 auto; font: bold 12px/20px "DejaVu Sans", sans-serif; color: #fff; }
.wb { width: 21px; height: 19px; margin-left: 1px; border: 1px solid #777; border-radius: 3px; background: linear-gradient(#6a6a6a, #333 50%, #444); }
.wb svg { display: block; width: 19px; height: 17px; }
.wb.close { width: 20px; background: linear-gradient(#f48a70, #e03818 50%, #ee5a38); border-color: #f0b0a0; }

.menubar { flex: none; height: 24px; display: flex; align-items: center; gap: 13px; padding: 0 5px 0 4px; background: #e1e1e1; border-bottom: 1px solid #bbb; }
.menubar .i16 { margin: 0 -8px 0 -12px; }
.menubar > button { white-space: pre; padding-top: 1px; }
.menubar button span { font-size: 10px; }
.menubar u { text-decoration-thickness: 1px; }
.mdi { margin-left: auto; display: flex; gap: 3px; }
.mdi button { width: 16px; height: 16px; border: 1px solid #888; border-radius: 3px; background: #f2f2f2; }
.mdi svg { display: block; width: 14px; height: 14px; }

.grip { flex: none; width: 3px; height: 50px; align-self: center; background: repeating-linear-gradient(#aaa 0 2px, #f5f5f5 2px 3px, transparent 3px 4px); }
.grip.short { height: 14px; }
.sep { flex: none; width: 2px; align-self: stretch; margin: 2px; background: linear-gradient(90deg, #aaa 50%, #f4f4f4 50%); }
.tight .sep { margin: 2px 1px; }

.toolrow { flex: none; height: 62px; display: flex; background: #e1e1e1; }
.lower { background: #d6d6d6; height: 63px; border-bottom: 2px solid #969696; }
.group { display: flex; align-items: center; padding-left: 4px; border: 1px solid #f0f0f0; border-width: 1px 0 1px 0; border-bottom-color: #b0b0b0; border-right: 1px solid #b5b5b5; background: linear-gradient(#dedede, #d0d0d0); }
.lower .group { background: linear-gradient(#dadada, #cbcbcb); }
.first .drop { width: 11px; }
.view { margin-left: 15px; }
.view .drop { width: 12px; }
.tb { flex: none; width: 31px; height: 30px; display: flex; align-items: center; justify-content: center; }
.start { width: 68px; gap: 4px; }
.finder { width: 94px; gap: 3px; }
.drop { flex: none; height: 30px; display: flex; align-items: center; justify-content: center; }
.over { flex: none; width: 15px; align-self: stretch; display: flex; align-items: flex-end; justify-content: center; padding-bottom: 6px; }
.lower .over { padding-bottom: 5px; width: 14px; }
.big { flex: none; width: 60px; height: 58px; padding: 2px 5px 0; display: flex; flex-direction: column; align-items: center; justify-content: flex-start; border: 1px solid transparent; line-height: 12px; }
.big span { margin-top: 7px; width: 48px; }
.big.on { background: #fff; border-color: #555; border-radius: 3px; }
.big:disabled { color: #999; }

.selbar { flex: none; height: 28px; display: flex; align-items: center; padding: 0 0 2px 5px; background: linear-gradient(#c2c2c2, #d8d8d8 8px, #d0d0d0); border-bottom: 1px solid #b4b4b4; }
.selbar button { flex: none; width: 23px; height: 20px; display: flex; align-items: center; justify-content: center; }
.selbar .over { width: 15px; margin-left: auto; align-items: flex-end; padding: 0; }
.selbar .sep { margin: 2px 3px; height: 20px; align-self: center; }
.combo { position: relative; width: 110px; height: 17px; margin-right: 8px; }
.combo.wide { width: 116px; margin-right: 5px; }
.combo select { display: block; width: 100%; height: 17px; appearance: none; border: 1px solid #777; border-radius: 2px; background: #fff; font: inherit; line-height: 14px; padding: 0 1px; color: #000; }
.combo .dn { position: absolute; right: 1px; top: 1px; width: 16px; height: 15px; border: 1px solid #2b70b8; background: linear-gradient(#cfe8fb, #4a9be2); pointer-events: none; }
.combo .dn::after { content: ""; position: absolute; left: 2px; top: 4px; border: 5px solid transparent; border-top: 6px solid #111; border-bottom: 0; }

.status { flex: none; height: 22px; display: flex; align-items: center; border-top: 1px solid #fff; border-bottom: 1px solid #808080; background: #dadada; }
.status .cue { flex: 0 1 643px; align-self: stretch; border-right: 1px solid #aaa; }
.status output { flex: 1; padding-left: 3px; font-size: 13px; font-weight: bold; white-space: pre; }
.status output span { font-size: 11px; }
.status .cell { width: 20px; align-self: stretch; border-left: 1px solid #aaa; }
.status .last { width: 36px; border-right: 1px solid #aaa; }
.status button { width: 22px; height: 18px; display: flex; align-items: center; justify-content: center; }
.status button svg { width: 14px; height: 14px; }

main { flex: 1; min-height: 0; display: flex; }
.rail { flex: none; width: 34px; padding-top: 16px; display: flex; flex-direction: column; align-items: flex-end; gap: 2px; background: linear-gradient(90deg, #aaa, #b4b4b4); border-right: 2px solid #777; }
.rail > button { flex: none; width: 27px; height: 40px; border: 1px solid #777; border-right: 0; border-radius: 4px 0 0 4px; background: linear-gradient(90deg, #dedede, #c4c4c4); display: flex; align-items: center; justify-content: center; }
.rail > button svg { width: 24px; height: 28px; }
.rail > .on { width: 29px; height: 42px; background: #ebebeb; }
.rail > .info { margin-top: 11px; }
.wave { width: 28px; height: 6px; margin: 4px 0 0; }
.pager { width: 30px; display: flex; flex-direction: column; align-items: center; gap: 1px; }
.pager button { width: 16px; height: 15px; border: 1px solid #888; background: #ddd; }
.pager svg { display: block; width: 13px; height: 13px; }

.nav { flex: none; width: 451px; min-height: 0; display: flex; flex-direction: column; padding: 1px 9px 4px 8px; background: #ebebeb; border-right: 2px solid #6c6c6c; border-top: 1px solid #fff; }
.nav h2 { flex: none; height: 29px; display: flex; align-items: center; padding-left: 6px; font-size: 13px; white-space: pre; }
.nav h2 svg { width: 11px; height: 11px; margin-right: 13px; }
.nav h2 span { font-size: 12px; }
.frame { flex: 1; min-height: 0; display: flex; flex-direction: column; border: 1px solid #666; border-left-width: 2px; background: #eee; }
.clip { flex: 1; min-height: 0; position: relative; overflow: hidden; }
table { width: 100%; table-layout: fixed; border-collapse: separate; border-spacing: 0; font-size: 10px; }
.c1 { width: 155px; } .c2 { width: 100px; } .c3 { width: 100px; } .c5 { width: 17px; }
th { height: 17px; padding: 0 0 0 5px; font: 12px/16px "Liberation Mono", "Noto Sans CJK SC", monospace; text-align: left; background: linear-gradient(#f4f5f5, #d2d5d7); border-bottom: 1px solid #888; border-right: 1px solid #aaa; }
th:nth-child(n+4) { border-right: 0; }
td { height: 20px; padding: 0 0 0 4px; line-height: 14px; background: #fff; border-bottom: 1px solid #e3e3e3; border-right: 1px solid #e3e3e3; color: #222; }
tbody tr:nth-child(even) td { background: #f6f6f6; }
td:first-child { padding: 0; border-right-color: #000; }
td:nth-child(2) { padding-left: 8px; }
td div { display: flex; height: 19px; align-items: stretch; }
td b { flex: 1; font-weight: normal; line-height: 20px; padding-left: 2px; }
.leaf { width: 89px; height: 20px; flex: none; }
.grp { width: 71px; height: 20px; flex: none; }
.chg { display: block; width: 8px; height: 14px; }
.g td { color: #00605c; }
.b td { color: #2d6fc4; }
tbody tr.sel:nth-child(n) td { color: #fff; background: #3296ff; }
tbody tr.sel:nth-child(n) td:first-child { background: #fff; }
.sel b { background: #3296ff; }
.vscroll { position: absolute; right: 0; top: 17px; bottom: 0; width: 16px; display: flex; flex-direction: column; align-items: center; padding: 7px 0; background: linear-gradient(90deg, #ddd, #f4f4f4); }
.vscroll .thumb { width: 14px; height: 52px; margin: 79px 0 auto; border: 1px solid #888; border-radius: 2px; background: repeating-linear-gradient(#444 0 1px, transparent 1px 3px) center/6px 9px no-repeat, linear-gradient(90deg, #f6f6f6, #c9cacc); }
.hscroll { flex: none; height: 18px; display: flex; align-items: center; padding: 0 25px 0 6px; background: #efefef; border-top: 1px solid #ddd; }
.hscroll .thumb { width: 203px; height: 15px; margin: 0 auto 0 9px; border: 1px solid #888; border-radius: 2px; background: repeating-linear-gradient(90deg, #444 0 1px, transparent 1px 3px) center/9px 6px no-repeat, linear-gradient(#f6f6f6, #c9cacc); }
.splitter { flex: none; height: 13px; display: flex; align-items: center; gap: 4px; }
.splitter::before, .splitter::after { content: ""; height: 2px; background: linear-gradient(#aaa 50%, #fff 50%); flex: 1; }
.splitter span { width: 80px; height: 6px; background: #d4d4d4; border: 1px solid #fff; border-right-color: #999; border-bottom-color: #999; }
.fold { flex: none; height: 23px; display: flex; align-items: center; padding-left: 6px; font-weight: bold; font-size: 13px; background: linear-gradient(#f8f8f8, #e8e8e8 50%, #d4d6d8); border: 1px solid #999; border-width: 0 1px 1px 0; }
.fold span { flex: 1; text-align: left; }
.fold svg { width: 23px; height: 12px; border-left: 1px solid #aaa; }

.viewport { flex: 1; min-width: 0; background: linear-gradient(#b4b6b8, #d2d4d5 45%, #e6e8ea 80%); }
#scene { display: block; width: 881px; height: 445px; shape-rendering: crispEdges; }
.path { fill: none; stroke: #0ff; stroke-width: 2; }
.path .thin { stroke-width: 1; }
.red { fill: none; stroke: #f00; stroke-width: 2; stroke-dasharray: 8 6; }
.blue { fill: none; stroke: #00f; stroke-width: 2; stroke-dasharray: 9 5; }
.fine { stroke-dasharray: 1 2; }
.solid { stroke: #00f; stroke-width: 2; }
#triad { shape-rendering: auto; font: 11px "Liberation Sans", sans-serif; }

.bottom { border-top: 1px solid #aaa; background: linear-gradient(#e2e2e2, #c8c8c8); height: 63px; }
.bottom .group { background: linear-gradient(#e4e4e4, #cbcbcb); }
.bottom .over { padding-bottom: 5px; }

.meter { position: absolute; right: 46px; bottom: 4px; width: 118px; height: 38px; display: flex; align-items: center; padding-right: 4px; border: 1px solid #999; border-radius: 19px; background: linear-gradient(#fafafa, #d4d4d4); font: 10px/15px "Noto Sans", sans-serif; }
.ball { flex: none; width: 48px; height: 48px; margin-left: -8px; border: 2px solid #ddd; outline: 1px solid #888; border-radius: 50%; background: linear-gradient(#0a7a46 0 48%, #48c85c 48%); color: #e9fff0; text-align: center; font: 14px/44px "Noto Sans", sans-serif; }
.meter dl { flex: 1; display: grid; grid-template-columns: 8px 1fr; column-gap: 2px; align-items: center; margin-left: 3px; }
.meter dt svg { display: block; width: 7px; height: 9px; }
.meter dd { text-align: right; }
.meter button { width: 20px; height: 20px; margin-left: 3px; }
.meter button svg { display: block; }
.mark { position: absolute; right: 20px; bottom: 12px; display: flex; gap: 7px; align-items: center; pointer-events: none; }
.mark > svg { width: 72px; height: 82px; opacity: .9; }
.mark div { display: flex; flex-direction: column; width: 183px; color: #fff; opacity: .5; white-space: nowrap; }
.mark strong { font: bold 42px/44px "Noto Sans CJK SC", sans-serif; }
.mark span { font: 18px/20px "DejaVu Sans", sans-serif; }
```

FILE: scene.js
```js
// Draws the level-by-level tool paths around the part.
const NS = "http://www.w3.org/2000/svg";
function add(parent, d, cls) {
  const p = document.createElementNS(NS, "path");
  p.setAttribute("d", d);
  if (cls) p.setAttribute("class", cls);
  document.getElementById(parent).appendChild(p);
}
// Half loops of a level; i insets the loop, y lowers it.
const rear = (y, i) => `M${754 + i} ${y + 315}Q${754 + i} ${y + 301} ${768 + i} ${y + 292}L${862 + i / 2} ${y + 243 + i / 2}Q885 ${y + 233 + i / 2} ${908 - i / 2} ${y + 243 + i / 2}L${1045 - i} ${y + 320}Q${1059 - i} ${y + 329} ${1059 - i} ${y + 345}`;
const fore = (y, i) => `M${754 + i} ${y + 310}Q${754 + i} ${y + 319} ${768 + i} ${y + 327}L${900 + i / 2} ${y + 399 - i / 2}Q913 ${y + 406 - i / 2} 927 ${y + 406 - i / 2}T${954 - i / 2} ${y + 399 - i / 2}L${1048 - i} ${y + 348}Q${1059 - i} ${y + 341} ${1059 - i} ${y + 330}`;

for (let y = 0; y <= 200; y += 8) add("back", rear(y, 0));
for (let y = 12; y <= 90; y += 8) add("back", rear(y, 12), "thin");
for (let y = 4; y <= 28; y += 3) add("back", `M906 ${262 + y}L992 ${312 + y}`);
for (let y = 0; y <= 192; y += 8) add(y < 60 ? "back" : "front", fore(y, 0));
for (let y = 8; y < 60; y += 8) add("front", `M${792 - y / 5} ${y + 332}L900 ${y + 392}Q927 ${y + 406} 954 ${y + 392}L1034 ${y + 350}`);
add("front", fore(196, 0));
add("front", fore(200, 0));
for (let y = 18; y <= 60; y += 4) add("front", `M${790 - y / 4} ${y + 322}L895 ${y + 382}Q927 ${y + 398} 960 ${y + 382}L1045 ${y + 335}`, "thin");
for (let y = 0; y <= 30; y += 6) add("front", `M813 ${y + 318}L897 ${y + 370}Q925 ${y + 383} 950 ${y + 370}L1028 ${y + 336}`);
for (let y = 6; y <= 80; y += 5) add("back", `M${800 - y / 8} ${y + 320}Q${790 - y / 5} ${y + 300} 815 ${y + 285}`, "thin");
for (const y of [56, 68]) {
  add("front", `M${782} ${y + 312}L900 ${y + 378}Q925 ${y + 388} 945 ${y + 384}`, "ledge");
}
add("back", "M754 315V510M1059 345V530M766 300V470");
```
